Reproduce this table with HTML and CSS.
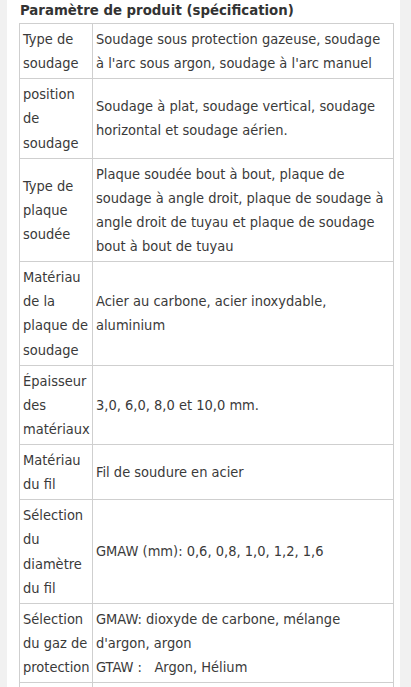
FILE: index.html
```html
<!DOCTYPE html>
<html lang="fr">
<head>
<meta charset="utf-8">
<link rel="stylesheet" href="styles.css">
</head>
<body>
<div class="page">
  <div class="panel">
    <h2 class="title">Paramètre de produit (spécification)</h2>
    <table class="spec">
      <colgroup><col class="c1"><col class="c2"></colgroup>
      <tr><td>Type de<br>soudage</td><td>Soudage sous protection gazeuse, soudage<br>à l'arc sous argon, soudage à l'arc manuel</td></tr>
      <tr><td>position<br>de<br>soudage</td><td>Soudage à plat, soudage vertical, soudage<br>horizontal et soudage aérien.</td></tr>
      <tr><td>Type de<br>plaque<br>soudée</td><td>Plaque soudée bout à bout, plaque de<br>soudage à angle droit, plaque de soudage à<br>angle droit de tuyau et plaque de soudage<br>bout à bout de tuyau</td></tr>
      <tr><td>Matériau<br>de la<br>plaque de<br>soudage</td><td>Acier au carbone, acier inoxydable,<br>aluminium</td></tr>
      <tr><td>Épaisseur<br>des<br>matériaux</td><td>3,0, 6,0, 8,0 et 10,0 mm.</td></tr>
      <tr><td>Matériau<br>du fil</td><td>Fil de soudure en acier</td></tr>
      <tr><td>Sélection<br>du<br>diamètre<br>du fil</td><td>GMAW (mm): 0,6, 0,8, 1,0, 1,2, 1,6</td></tr>
      <tr><td>Sélection<br>du gaz de<br>protection</td><td>GMAW: dioxyde de carbone, mélange<br>d'argon, argon<br>GTAW :&nbsp;&nbsp; Argon, Hélium</td></tr>
      <tr><td>&nbsp;</td><td>&nbsp;</td></tr>
    </table>
  </div>
</div>
</body>
</html>
```

FILE: styles.css
```css
html, body {
  margin: 0;
  padding: 0;
  background: #f1f1f1;
}
.page {
  padding: 0 11px 0 7px;
  height: 687px;
  overflow: hidden;
}
.panel {
  background: #fff;
  padding: 0 6px 0 12px;
  height: 100%;
}
.title {
  margin: 0;
  padding: 0 0 3px 1px;
  font-family: "DejaVu Sans Condensed", "DejaVu Sans", sans-serif;
  font-weight: bold;
  font-size: 14.8px;
  line-height: 20px;
  color: #333;
}
.spec {
  border-collapse: collapse;
  table-layout: fixed;
  width: 375px;
  font-family: "DejaVu Sans Condensed", "DejaVu Sans", sans-serif;
  font-size: 14.5px;
  line-height: 24.12px;
  color: #3a3a3a;
}
.c1 { width: 73px; }
.spec td {
  border: 1px solid #cfcfcf;
  padding: 3px 3px;
  vertical-align: middle;
  white-space: nowrap;
}
```
